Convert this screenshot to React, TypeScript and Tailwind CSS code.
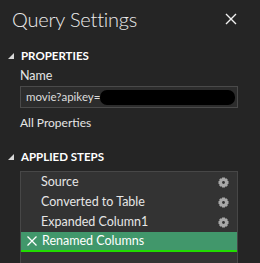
const font = { fontFamily: '"Segoe UI", Lato, "Open Sans", sans-serif' };

function Caret() {
  return (
    <svg width="6" height="6" viewBox="0 0 6 6" className="shrink-0">
      <polygon points="6,0 6,6 0,6" fill="#d8d8d8" />
    </svg>
  );
}

function Gear() {
  return (
    <svg width="11" height="11" viewBox="0 0 11 11">
      <g fill="#a8a8a8">
        <rect x="4" y="0.5" width="3" height="10" />
        <rect x="0.5" y="4" width="10" height="3" />
        <rect x="4" y="0.5" width="3" height="10" transform="rotate(45 5.5 5.5)" />
        <rect x="4" y="0.5" width="3" height="10" transform="rotate(-45 5.5 5.5)" />
        <circle cx="5.5" cy="5.5" r="3.6" />
      </g>
      <circle cx="5.5" cy="5.5" r="1.4" fill="#333333" />
    </svg>
  );
}

function SectionTitle({ label }: { label: string }) {
  return (
    <div className="flex items-center gap-[7px] pl-[8px]">
      <Caret />
      <span className="text-[11.5px] font-bold leading-[16px] text-white">{label}</span>
    </div>
  );
}

const steps = ["Source", "Converted to Table", "Expanded Column1"];

export default function App() {
  return (
    <div className="h-[263px] w-[260px] overflow-hidden bg-[#252525] text-[#e6e6e6]" style={font}>
      <header className="flex items-center justify-between pl-[12px] pr-[23px] pt-[3px]">
        <h1 className="text-[20px] font-light leading-[32px] tracking-[-0.2px] text-[#ececec]">Query Settings</h1>
        <svg width="12" height="12" viewBox="0 0 12 12">
          <path d="M1 1 L11 11 M11 1 L1 11" stroke="#f0f0f0" strokeWidth="1.4" />
        </svg>
      </header>

      <section className="mt-[13px]">
        <SectionTitle label="PROPERTIES" />
        <div className="pl-[20px] pr-[22px]">
          <p className="mt-[4px] text-[12.5px] leading-[16px]">Name</p>
          <div className="mt-[2px] flex h-[22px] items-center border border-[#4a4a4a] bg-[#2c2c2c] pl-[5px] pr-[2px]">
            <span className="text-[11.5px] text-[#dcdcdc]">movie?apikey=</span>
            <div className="h-[15px] flex-1 rounded-[7px] bg-black" />
          </div>
          <p className="mt-[7px] text-[12px] leading-[16px]">All Properties</p>
        </div>
      </section>

      <section className="mt-[18px]">
        <SectionTitle label="APPLIED STEPS" />
        <ul className="ml-[20px] mr-[22px] mt-[6px] h-[100px] border border-[#474747] bg-[#333333]">
          {steps.map((s) => (
            <li key={s} className="flex h-[20px] items-center justify-between pl-[20px] pr-[8px]">
              <span className="text-[12.5px] text-[#e6e6e6]">{s}</span>
              <Gear />
            </li>
          ))}
          <li className="flex h-[20px] items-center gap-[5px] border-b-[2px] border-[#22dd00] bg-[#41976b] pl-[6px]">
            <svg width="10" height="10" viewBox="0 0 10 10">
              <path d="M0.5 0.5 L9.5 9.5 M9.5 0.5 L0.5 9.5" stroke="#ffffff" strokeWidth="1.3" />
            </svg>
            <span className="text-[12.5px] text-white">Renamed Columns</span>
          </li>
        </ul>
      </section>
    </div>
  );
}
